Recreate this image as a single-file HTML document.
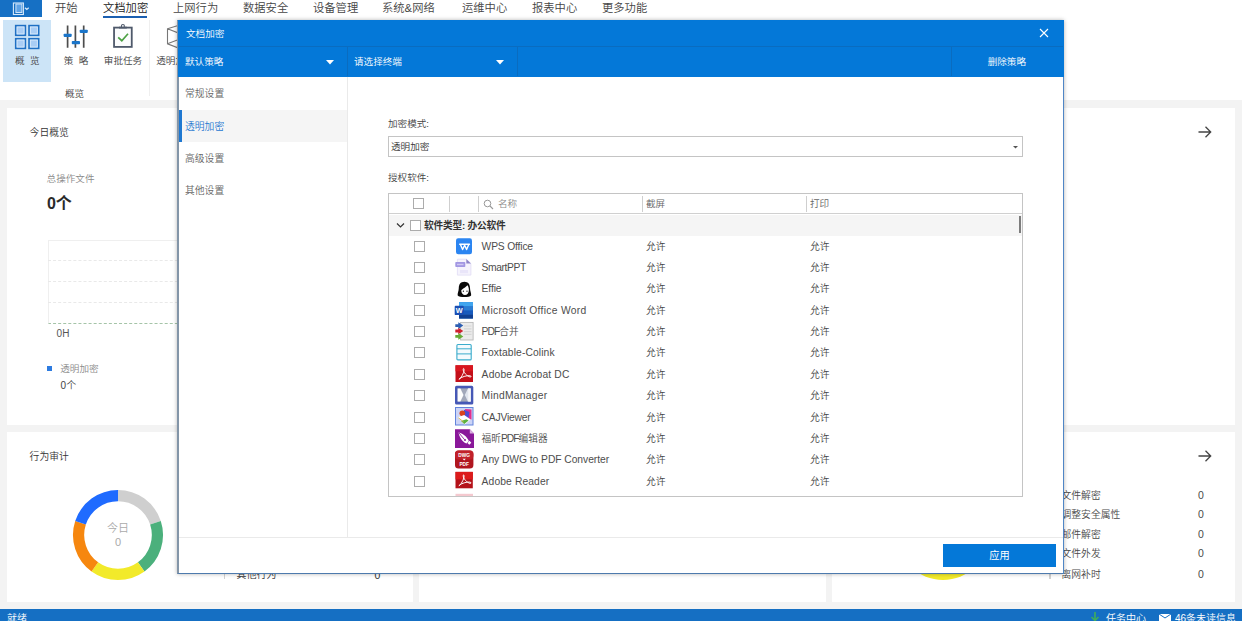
<!DOCTYPE html>
<html lang="zh-CN">
<head>
<meta charset="utf-8">
<title>文档加密</title>
<style>
*{box-sizing:border-box;margin:0;padding:0}
html,body{width:1242px;height:621px;overflow:hidden}
body{position:relative;background:#f3f3f3;font-family:"Liberation Sans","Noto Sans CJK SC",sans-serif;font-size:10px;color:#333;font-weight:350;-webkit-font-smoothing:antialiased}
.abs{position:absolute;white-space:nowrap;line-height:1}
/* ribbon */
#ribbon{position:absolute;left:0;top:0;width:1242px;height:100px;background:#fff}
#appbtn{position:absolute;left:0;top:0;width:41.600px;height:17.200px;background:#1670c4}
.tab{position:absolute;top:1px;font-size:11.3px;line-height:14px;color:#444;white-space:nowrap}
.rb{position:absolute;top:20px;height:62px;text-align:center}
.rb .lbl{position:absolute;left:0;right:0;top:34.500px;font-size:9.6px;line-height:12px;color:#444;white-space:pre}
/* cards */
.card{position:absolute;background:#fff}
.t11{font-size:9.8px;color:#333}
.gray{color:#8a8a8a}
/* status */
#status{position:absolute;left:0;top:608.600px;width:1242px;height:13px;background:#156fc3;color:#fff;font-size:10px}
/* dialog */
#dlg{position:absolute;left:177px;top:20px;width:887px;height:554px;background:#fff;border-style:solid;border-width:1px 1px 1px 2px;border-color:#0a6fc8 #4f86c6 #4d7aad #8395a8;box-shadow:0 0 4px rgba(0,0,0,.3)}
#dlg .title{position:absolute;left:0;top:0;width:884px;height:25px;background:#0478d8}
#dlg .sub{position:absolute;left:0;top:25px;width:884px;height:30.600px;background:#0478d8;border-top:1px solid #0a6cc0}
.w{color:#fff}
.nav{position:absolute;left:0;width:168px;height:32px;font-size:9.800px;line-height:34px;padding-left:6px;color:#666}
.row{position:absolute;left:0;width:632px;height:21.3px}
.cb{position:absolute;width:11px;height:11px;border:1px solid #acacac;background:#fff}
.row .cb{left:25px;top:5px}
.row .ic{position:absolute;left:66px;top:1.400px;width:18.500px;height:18.500px;overflow:visible}
.row .nm{position:absolute;left:92.6px;top:0;line-height:21.8px;font-size:10.3px;color:#4d4d4d;white-space:nowrap}
.row .nm .cj{font-size:9.7px;letter-spacing:0}
.row .a1{position:absolute;left:257px;top:0;line-height:21px;font-size:9.800px;color:#444}
.row .a2{position:absolute;left:421px;top:0;line-height:21px;font-size:9.800px;color:#444}
</style>
</head>
<body>
<!-- RIBBON -->
<div id="ribbon">
  <div id="appbtn">
    <svg class="abs" style="left:12px;top:1.500px" width="20" height="14" viewBox="0 0 20 14"><rect x="1.400" y="1" width="10" height="11.500" fill="none" stroke="#d6e9fb" stroke-width="1.100"/><rect x="3.900" y="2" width="6" height="8.500" fill="#5fa3e6" stroke="#cfe4f9" stroke-width="1"/><path d="M12.900 5.700l1.900 1.800 1.900-1.800" fill="none" stroke="#d6e9fb" stroke-width="1.200"/></svg>
  </div>
  <div class="tab" style="left:55px">开始</div>
  <div class="tab" style="left:103px;color:#222">文档加密</div>
  <div class="abs" style="left:103px;top:15.5px;width:44px;height:2px;background:#1b5fb0"></div>
  <div class="tab" style="left:173px">上网行为</div>
  <div class="tab" style="left:243px">数据安全</div>
  <div class="tab" style="left:313px">设备管理</div>
  <div class="tab" style="left:382px">系统&amp;网络</div>
  <div class="tab" style="left:462px">运维中心</div>
  <div class="tab" style="left:532px">报表中心</div>
  <div class="tab" style="left:602px">更多功能</div>

  <div class="rb" style="left:3.200px;width:48.300px;background:#cce4f7">
    <svg class="abs" style="left:10.800px;top:4px" width="26" height="26" viewBox="0 0 26 26"><g fill="#a9cdf5" stroke="#1f70c4" stroke-width="1.700"><rect x="1.750" y="1.650" width="9.600" height="9.600"/><rect x="15.050" y="1.650" width="9.600" height="9.600"/><rect x="1.750" y="14.750" width="9.600" height="9.600"/><rect x="15.050" y="14.750" width="9.600" height="9.600"/></g><g fill="none" stroke="#d9eafb" stroke-width="0.900"><rect x="3.050" y="2.950" width="7" height="7"/><rect x="16.350" y="2.950" width="7" height="7"/><rect x="3.050" y="16.050" width="7" height="7"/><rect x="16.350" y="16.050" width="7" height="7"/></g></svg>
    <div class="lbl">概  览</div>
  </div>
  <div class="rb" style="left:52px;width:48px">
    <svg class="abs" style="left:11px;top:4px" width="26" height="26" viewBox="0 0 26 26"><g stroke="#4d4d4d" stroke-width="1.700"><path d="M4.600 1.600v22.200M12.400 1.600v22.200M20.700 1.600v22.200"/></g><g fill="#1b75c9"><rect x="0.600" y="9.700" width="8.100" height="3.200" rx="0.800"/><rect x="8.800" y="17" width="8.200" height="3.200" rx="0.800"/><rect x="16.700" y="5.700" width="8.100" height="3.200" rx="0.800"/></g></svg>
    <div class="lbl">策  略</div>
  </div>
  <div class="rb" style="left:100px;width:46px">
    <svg class="abs" style="left:11px;top:3px" width="24" height="27" viewBox="0 0 24 27"><rect x="3.050" y="4.600" width="17.700" height="19.300" fill="#fbfcfd" stroke="#4f596b" stroke-width="1.800"/><circle cx="11.900" cy="3" r="1.500" fill="#fff" stroke="#4f596b" stroke-width="1.100"/><rect x="8" y="3.700" width="7.800" height="1.800" fill="#4f596b"/><path d="M7.200 14.300l3.600 3.400 6.200-7" fill="none" stroke="#4aa043" stroke-width="1.700"/></svg>
    <div class="lbl">审批任务</div>
  </div>
  <div class="rb" style="left:145.400px;width:60px">
    <svg class="abs" style="left:19px;top:3px" width="30" height="28" viewBox="0 0 30 28"><path d="M3.500 5.800l13-4 13 4v15l-13 5-13-5z M3.500 5.800l13 5 13-5 M16.500 10.800v15 M3.500 20.800l13-5 13 5 M16.500 1.800v14" fill="none" stroke="#777" stroke-width="1.100"/></svg>
    <div class="lbl">透明加密</div>
  </div>
  <div class="abs" style="left:149.200px;top:20px;width:1px;height:76px;background:#efefef"></div>
  <div class="abs" style="left:65px;top:88px;font-size:9.600px;line-height:12px;color:#444">概览</div>
</div>

<!-- CARDS -->
<div class="card" style="left:6.600px;top:107.700px;width:1228.800px;height:316.900px">
  <div class="abs t11" style="left:23px;top:20px">今日概览</div>
  <div class="abs gray" style="left:40px;top:66.400px;font-size:9.600px">总操作文件</div>
  <div class="abs" style="left:40.300px;top:88.200px;font-size:16px;font-weight:bold;color:#2a2a2a">0个</div>
  <div class="abs" style="left:41px;top:132.300px;width:140px;height:84px;border-left:1px solid #efefef;border-top:1px solid #efefef;border-bottom:1px dashed #a5c4a8"></div>
  <div class="abs" style="left:41px;top:152.400px;width:140px;border-top:1px dashed #e9e9e9"></div>
  <div class="abs" style="left:41px;top:173.500px;width:140px;border-top:1px dashed #e9e9e9"></div>
  <div class="abs" style="left:41px;top:194.700px;width:140px;border-top:1px dashed #e9e9e9"></div>
  <div class="abs" style="left:50px;top:221px;font-size:10px;color:#555">0H</div>
  <div class="abs" style="left:40px;top:258px;width:5px;height:5px;background:#2d7be0"></div>
  <div class="abs gray" style="left:53.700px;top:256px;font-size:9.600px">透明加密</div>
  <div class="abs" style="left:54px;top:273.500px;font-size:10px;color:#444">0个</div>
  <svg class="abs" style="left:1190px;top:17px" width="16" height="14" viewBox="0 0 16 14"><path d="M1.500 7h12M8.500 1.800l5.200 5.200-5.200 5.200" fill="none" stroke="#444" stroke-width="1.300"/></svg>
</div>

<div class="card" style="left:6.600px;top:431.700px;width:406.800px;height:170px">
  <div class="abs t11" style="left:23px;top:20px">行为审计</div>
  <svg class="abs" style="left:61.400px;top:53.300px" width="100" height="100" viewBox="-50 -50 100 100">
    <g fill="none" stroke-width="11.200">
      <path d="M0.00 -39.40A39.4 39.4 0 0 1 37.47 -12.18" stroke="#cfcfcf"/>
      <path d="M37.47 -12.18A39.4 39.4 0 0 1 23.16 31.88" stroke="#4bb07c"/>
      <path d="M23.16 31.88A39.4 39.4 0 0 1 -23.16 31.88" stroke="#f2ea2a"/>
      <path d="M-23.16 31.88A39.4 39.4 0 0 1 -37.47 -12.18" stroke="#f6870f"/>
      <path d="M-37.47 -12.18A39.4 39.4 0 0 1 -0.00 -39.40" stroke="#1f6bff"/>
    </g>
    <text x="0" y="-3.200" text-anchor="middle" font-size="11" fill="#aaa">今日</text>
    <text x="0" y="10.800" text-anchor="middle" font-size="11" fill="#aaa">0</text>
  </svg>
  <div class="abs" style="left:217px;top:136px;width:1.500px;height:11px;background:#d2d2d2"></div>
  <div class="abs" style="left:230px;top:138px;font-size:10px;color:#333">其他行为</div>
  <div class="abs" style="left:368px;top:138px;font-size:10.500px;color:#333">0</div>
</div>
<div class="card" style="left:419px;top:431.700px;width:407px;height:170px"></div>
<div class="card" style="left:832px;top:431.700px;width:403.400px;height:170px">
  <svg class="abs" style="left:365px;top:17px" width="16" height="14" viewBox="0 0 16 14"><path d="M1.500 7h12M8.500 1.800l5.200 5.200-5.200 5.200" fill="none" stroke="#444" stroke-width="1.300"/></svg>
  <svg class="abs" style="left:61px;top:53.300px" width="100" height="100" viewBox="-50 -50 100 100"><circle r="39.400" fill="none" stroke="#f2ea2a" stroke-width="11.200"/></svg>
  <div class="abs" style="left:217px;top:136px;width:1.500px;height:11px;background:#d2d2d2"></div>
  <div class="abs" style="left:229.500px;top:59px;font-size:9.800px;color:#4a4a4a">文件解密</div>
  <div class="abs" style="left:229.500px;top:78px;font-size:9.800px;color:#4a4a4a">调整安全属性</div>
  <div class="abs" style="left:229.500px;top:98px;font-size:9.800px;color:#4a4a4a">邮件解密</div>
  <div class="abs" style="left:229.500px;top:117px;font-size:9.800px;color:#4a4a4a">文件外发</div>
  <div class="abs" style="left:229.500px;top:138px;font-size:9.800px;color:#4a4a4a">离网补时</div>
  <div class="abs" style="left:366px;top:58.3px;font-size:10.500px;color:#4a4a4a">0</div>
  <div class="abs" style="left:366px;top:77.3px;font-size:10.500px;color:#4a4a4a">0</div>
  <div class="abs" style="left:366px;top:97.3px;font-size:10.500px;color:#4a4a4a">0</div>
  <div class="abs" style="left:366px;top:116.3px;font-size:10.500px;color:#4a4a4a">0</div>
  <div class="abs" style="left:366px;top:137.3px;font-size:10.500px;color:#4a4a4a">0</div>
</div>

<!-- STATUS BAR -->
<div id="status">
  <div class="abs" style="left:7px;top:5px">就绪</div>
  <svg class="abs" style="left:1089px;top:3px" width="12" height="12" viewBox="0 0 12 12"><path d="M6 0v8M2.500 5l3.500 3.500 3.500-3.500" fill="none" stroke="#3fae5a" stroke-width="1.600"/></svg>
  <div class="abs" style="left:1106px;top:5px">任务中心</div>
  <svg class="abs" style="left:1159px;top:5.500px" width="12" height="9" viewBox="0 0 12 9"><rect width="12" height="9" fill="#fff"/><path d="M0 0l6 4 6-4" fill="none" stroke="#156fc3" stroke-width="1"/></svg>
  <div class="abs" style="left:1175px;top:5px">46条未读信息</div>
</div>

<!-- DIALOG -->
<div id="dlg">
  <div class="abs" style="left:-1.200px;top:-1px;width:886.500px;height:56.600px;background:#0478d8"></div>
  <div class="title">
    <div class="abs w" style="left:7px;top:8px;font-size:9.600px">文档加密</div>
    <svg class="abs" style="left:860px;top:7px" width="10" height="10" viewBox="0 0 10 10"><path d="M1 1l8 8M9 1l-8 8" stroke="#fff" stroke-width="1.100" fill="none"/></svg>
  </div>
  <div class="sub">
    <div class="abs w" style="left:6px;top:10px;font-size:9.600px">默认策略</div>
    <svg class="abs" style="left:147px;top:13px" width="8" height="5" viewBox="0 0 8 5"><path d="M0 0h8l-4 4.500z" fill="#fff"/></svg>
    <div class="abs" style="left:168px;top:0;width:1px;height:29px;background:#0a6cc0"></div>
    <div class="abs w" style="left:175px;top:10px;font-size:9.600px">请选择终端</div>
    <svg class="abs" style="left:317px;top:13px" width="8" height="5" viewBox="0 0 8 5"><path d="M0 0h8l-4 4.500z" fill="#fff"/></svg>
    <div class="abs" style="left:338px;top:0;width:1px;height:29px;background:#0a6cc0"></div>
    <div class="abs" style="left:772px;top:0;width:1px;height:29px;background:#0a6cc0"></div>
    <div class="abs w" style="left:808.7px;top:10px;font-size:9.600px">删除策略</div>
  </div>
  <!-- nav -->
  <div class="nav" style="top:56px">常规设置</div>
  <div class="nav" style="top:88.500px;background:#f5f5f5;color:#1f78d1;border-left:3px solid #1f78d1;padding-left:3px">透明加密</div>
  <div class="nav" style="top:121px">高级设置</div>
  <div class="nav" style="top:153px">其他设置</div>
  <div class="abs" style="left:168px;top:56px;width:1px;height:461px;background:#eaeaea"></div>
  <div class="abs" style="left:0;top:516px;width:884px;height:1px;background:#eaeaea"></div>
  <div class="abs w" style="left:764px;top:523px;width:113px;height:23px;background:#0478d8;text-align:center;line-height:23px;font-size:10.200px;font-weight:400">应用</div>

  <!-- content -->
  <div class="abs" style="left:209px;top:98px;font-size:9.600px;color:#444">加密模式:</div>
  <div class="abs" style="left:209px;top:115px;width:635px;height:21px;border:1px solid #c4c4c4;background:#fff">
    <div class="abs" style="left:2px;top:5px;font-size:9.600px;color:#333">透明加密</div>
    <svg class="abs" style="left:624px;top:9px" width="5" height="3" viewBox="0 0 5 3"><path d="M0 0h5l-2.500 2.500z" fill="#555"/></svg>
  </div>
  <div class="abs" style="left:209px;top:152px;font-size:9.600px;color:#444">授权软件:</div>
  <div id="tbl" class="abs" style="left:209px;top:172px;width:635px;height:304px;border:1px solid #c4c4c4;overflow:hidden">
    <!-- header -->
    <div class="abs" style="left:0;top:0;width:633px;height:20px;border-bottom:1px solid #d0d0d0;background:#fff"></div>
    <div class="cb" style="left:24px;top:4.300px"></div>
    <div class="abs" style="left:60px;top:2px;width:1px;height:16px;background:#cfcfcf"></div>
    <div class="abs" style="left:89px;top:2px;width:1px;height:16px;background:#cfcfcf"></div>
    <div class="abs" style="left:253px;top:2px;width:1px;height:16px;background:#cfcfcf"></div>
    <div class="abs" style="left:417px;top:2px;width:1px;height:16px;background:#cfcfcf"></div>
    <svg class="abs" style="left:94px;top:5px" width="11" height="11" viewBox="0 0 11 11"><circle cx="4.500" cy="4.500" r="3.300" fill="none" stroke="#999" stroke-width="1"/><path d="M7 7l3 3" stroke="#999" stroke-width="1.100"/></svg>
    <div class="abs gray" style="left:109px;top:5px;font-size:9.600px">名称</div>
    <div class="abs" style="left:257px;top:5px;font-size:9.600px;color:#666">截屏</div>
    <div class="abs" style="left:421px;top:5px;font-size:9.600px;color:#666">打印</div>
    <!-- group -->
    <div class="abs" style="left:0;top:21px;width:633px;height:20.700px;background:#f5f5f5"></div>
    <svg class="abs" style="left:7px;top:28px" width="9" height="7" viewBox="0 0 9 7"><path d="M1 1.500l3.500 3.500 3.500-3.500" fill="none" stroke="#333" stroke-width="1.200"/></svg>
    <div class="cb" style="left:21px;top:26px"></div>
    <div id="grp" class="abs" style="left:35px;top:26.500px;font-size:9.700px;font-weight:bold;color:#333;letter-spacing:-0.2px">软件类型: 办公软件</div>
    <div class="abs" style="left:630px;top:22px;width:2px;height:17px;background:#7d7d7d"></div>
    <div id="rows" class="abs" style="left:0;top:41.600px;width:633px">
<div class="row" style="top:0.0px"><div class="cb"></div><svg class="ic" style="top:1.4px" viewBox="0 0 18.5 18.5"><rect x="1" y="1.200" width="16" height="16" rx="2.200" fill="#2b85f1"/><path d="M4.700 7.200h9.800M5.300 7.300l2.300 5.200 2-4.300 2 4.300 2.300-5.200" fill="none" stroke="#fff" stroke-width="1.400" stroke-linejoin="round" stroke-linecap="round"/></svg><span class="nm" style="letter-spacing:-0.17px">WPS Office</span><span class="a1">允许</span><span class="a2">允许</span></div>
<div class="row" style="top:21.36px"><div class="cb"></div><svg class="ic" style="top:1.33px" viewBox="0 0 18.5 18.5"><path d="M2.400 1.200h9l4.500 4.400v11.500h-13.500z" fill="#f5f3fd" stroke="#e1dcf5" stroke-width="0.800"/><path d="M11.300 0.900v4.700h4.700z" fill="#8e84c9"/><rect x="0.300" y="4" width="10" height="5.100" rx="0.800" fill="#a297e3"/><rect x="2" y="5.800" width="6.500" height="1.400" fill="#cfc8f2"/><rect x="5" y="12" width="8" height="3.200" fill="#e9e5f9"/></svg><span class="nm" style="letter-spacing:-0.4px">SmartPPT</span><span class="a1">允许</span><span class="a2">允许</span></div>
<div class="row" style="top:42.73px"><div class="cb"></div><svg class="ic" style="top:1.27px" viewBox="0 0 18.5 18.5"><path d="M9.400 1.700c-4 0-5.600 2.900-5.600 6.300 0 3-1.600 5.500-1.100 7.500 1.600 2 11.800 2 13.400 0 0.500-2-1.100-4.500-1.100-7.500 0-3.400-1.600-6.300-5.600-6.300z" fill="#0a0a0a"/><path d="M6.300 10.700c0-1.500 3.200-2.200 6.200-5.400 0.900 1.300 1.400 3.200 1.400 4.800 0 3-1.900 5-3.900 5s-3.700-2-3.700-4.400z" fill="#fff"/><circle cx="8.400" cy="11.200" r="0.650" fill="#111"/><circle cx="12" cy="11.200" r="0.650" fill="#111"/></svg><span class="nm" style="letter-spacing:-0.12px">Effie</span><span class="a1">允许</span><span class="a2">允许</span></div>
<div class="row" style="top:64.09px"><div class="cb"></div><svg class="ic" style="top:1.2px" viewBox="0 0 18.5 18.5"><rect x="4" y="1.100" width="14" height="16.500" rx="0.900" fill="#2b7cd3"/><rect x="4" y="1.100" width="14" height="4.200" fill="#41a5ee"/><rect x="4" y="5.300" width="14" height="4.100" fill="#2b7cd3"/><rect x="4" y="9.400" width="14" height="4.100" fill="#185abd"/><rect x="4" y="13.500" width="14" height="4.100" fill="#103f91"/><rect x="-0.300" y="4.800" width="9" height="9.300" rx="0.900" fill="#1a4fb4"/><text x="4.200" y="12.100" text-anchor="middle" font-size="7.300" font-weight="bold" fill="#fff" font-family="Liberation Sans,sans-serif">W</text></svg><span class="nm" style="letter-spacing:0.3px">Microsoft Office Word</span><span class="a1">允许</span><span class="a2">允许</span></div>
<div class="row" style="top:85.46px"><div class="cb"></div><svg class="ic" style="top:1.14px" viewBox="0 0 18.5 18.5"><rect x="5.600" y="0.400" width="12.500" height="17.600" fill="#ebebeb" stroke="#b9b9b9" stroke-width="0.900"/><path d="M9 4h7.500M9 6.800h7.500M9 9.600h7.500M9 12.400h7.500" stroke="#d6d6d6" stroke-width="1.200"/><path d="M0.300 2.200h3v-1.900l5 3.300-5 3.300v-1.900h-3z" fill="#2d5fb3"/><path d="M0.300 7.400h3v-1.600l5 3.200-5 3.200v-1.600h-3z" fill="#d0202f"/><path d="M0.300 13h3v-1.900l5 3.300-5 3.300v-1.900h-3z" fill="#66ab35"/></svg><span class="nm" style="letter-spacing:-1.0px">PDF<span class="cj">合并</span></span><span class="a1">允许</span><span class="a2">允许</span></div>
<div class="row" style="top:106.82px"><div class="cb"></div><svg class="ic" style="top:1.07px" viewBox="0 0 18.5 18.5"><rect x="1.900" y="1.500" width="14.300" height="15.400" rx="1" fill="#f3fafd" stroke="#3aaccc" stroke-width="1.100"/><path d="M1.900 5.800h14.300M1.900 10.900h14.300" stroke="#3aaccc" stroke-width="1"/></svg><span class="nm" style="letter-spacing:0.1px">Foxtable-Colink</span><span class="a1">允许</span><span class="a2">允许</span></div>
<div class="row" style="top:128.19px"><div class="cb"></div><svg class="ic" style="top:1.01px" viewBox="0 0 18.5 18.5"><rect x="0.500" y="0.300" width="17.500" height="16.700" fill="#c30f19"/><rect x="0.500" y="0.300" width="17.500" height="6" fill="#d8161f"/><path d="M3.900 14.300C5.700 13.600 8.900 8.200 9.100 4.700C9.200 3.100 8.200 3.100 8.200 4.500C8.300 7.200 11.800 11.200 15.100 12C16.400 12.200 16.400 10.900 14.900 10.700C11.800 10.300 6.200 11.900 3.900 14.300z" fill="none" stroke="#fff" stroke-width="0.950" stroke-linejoin="round"/></svg><span class="nm" style="letter-spacing:0.169px">Adobe Acrobat DC</span><span class="a1">允许</span><span class="a2">允许</span></div>
<div class="row" style="top:149.55px"><div class="cb"></div><svg class="ic" style="top:0.94px" viewBox="0 0 18.5 18.5"><rect x="0" y="-0.200" width="18.300" height="18.700" rx="1.600" fill="#4658b6"/><rect x="2.600" y="2.400" width="13.100" height="13.200" fill="#a2a8ba"/><path d="M2.600 2.400h2.800l3.100 6.600-3.100 6.600h-2.800z" fill="#fdfdfd"/><path d="M15.700 2.400h-2.800l-3.100 6.600 3.100 6.600h2.800z" fill="#e1e5ee"/><rect x="13.200" y="2.400" width="2.500" height="13.200" fill="#f6f6f9"/></svg><span class="nm" style="letter-spacing:0.273px">MindManager</span><span class="a1">允许</span><span class="a2">允许</span></div>
<div class="row" style="top:170.92px"><div class="cb"></div><svg class="ic" style="top:0.88px" viewBox="0 0 18.5 18.5"><rect x="0.500" y="0.500" width="17.500" height="17.500" fill="#ccd4f6" stroke="#6384dc" stroke-width="1"/><path d="M10 2l6.500 0.500v10h-4.500z" fill="#e32d8c"/><path d="M9 2.700l5.400 2.200-1.100 7.600-5.400-1.100z" fill="#4c4cd2"/><circle cx="7.300" cy="6.200" r="2.800" fill="#d9431e"/><path d="M2.700 10.300l6.500-2.200 6.500 4.400-6 4.900z" fill="#fff"/><path d="M6 14.100l3.300 3 4.300-3.500-2.200-1.400z" fill="#5ab242"/><path d="M3.300 10.700l5.400 4.300" stroke="#d8b34a" stroke-width="0.900"/></svg><span class="nm" style="letter-spacing:-0.2px">CAJViewer</span><span class="a1">允许</span><span class="a2">允许</span></div>
<div class="row" style="top:192.28px"><div class="cb"></div><svg class="ic" style="top:0.81px" viewBox="0 0 18.5 18.5"><path d="M0 0.300h14.800l4.200 4.200v14.400h-19z" fill="#8a189a"/><path d="M14.800 0.300v4.200h4.200z" fill="#d9addf"/><path d="M3.600 3.500c3.900 0.900 8 3.600 10.300 8.400l-2.400 2.700c-4.900-2.200-7.200-6.700-7.900-11.100z" fill="#fff"/><path d="M4 4l5.600 6.700" stroke="#8a189a" stroke-width="0.900"/><circle cx="10" cy="11.100" r="1" fill="#8a189a"/><path d="M12.500 13.900l2-2.100 1.800 1.900-2 2.100z" fill="#fff"/></svg><span class="nm" style="letter-spacing:-1.0px"><span class="cj">福昕</span>PDF<span class="cj">编辑器</span></span><span class="a1">允许</span><span class="a2">允许</span></div>
<div class="row" style="top:213.65px"><div class="cb"></div><svg class="ic" style="top:0.75px" viewBox="0 0 18.5 18.5"><rect x="0" y="0.400" width="18.400" height="18.200" rx="3.600" fill="#b0161f"/><rect x="0" y="0.400" width="18.400" height="9" rx="3.600" fill="#c1212a"/><text x="9.200" y="6.900" text-anchor="middle" font-size="4.800" font-weight="bold" fill="#fff" font-family="Liberation Sans,sans-serif">DWG</text><path d="M7.600 8.700h3.200l-1.600 1.900z" fill="#fff"/><text x="9.200" y="15.900" text-anchor="middle" font-size="4.800" font-weight="bold" fill="#fff" font-family="Liberation Sans,sans-serif">PDF</text></svg><span class="nm" style="letter-spacing:-0.054px">Any DWG to PDF Converter</span><span class="a1">允许</span><span class="a2">允许</span></div>
<div class="row" style="top:235.01px"><div class="cb"></div><svg class="ic" style="top:0.68px" viewBox="0 0 18.5 18.5"><rect x="0.500" y="0.900" width="17.300" height="16.400" fill="#b41119"/><rect x="0.500" y="0.900" width="17.300" height="7.500" fill="#dc1b1b"/><g transform="translate(0,0.400)"><path d="M3.900 14.300C5.700 13.600 8.900 8.200 9.100 4.700C9.200 3.100 8.200 3.100 8.200 4.500C8.300 7.200 11.800 11.200 15.100 12C16.400 12.200 16.400 10.900 14.900 10.700C11.800 10.300 6.200 11.900 3.900 14.300z" fill="none" stroke="#fff" stroke-width="0.950" stroke-linejoin="round"/></g></svg><span class="nm" style="letter-spacing:0.108px">Adobe Reader</span><span class="a1">允许</span><span class="a2">允许</span></div>
<div class="row" style="top:256.38px"><div class="cb"></div><svg class="ic" style="top:0.62px" viewBox="0 0 18.5 18.5"><rect x="0.500" y="0.800" width="17.500" height="16" fill="#f4c9cf"/></svg></div>
<!--endrows--></div>
  </div>
</div>
</body>
</html>
